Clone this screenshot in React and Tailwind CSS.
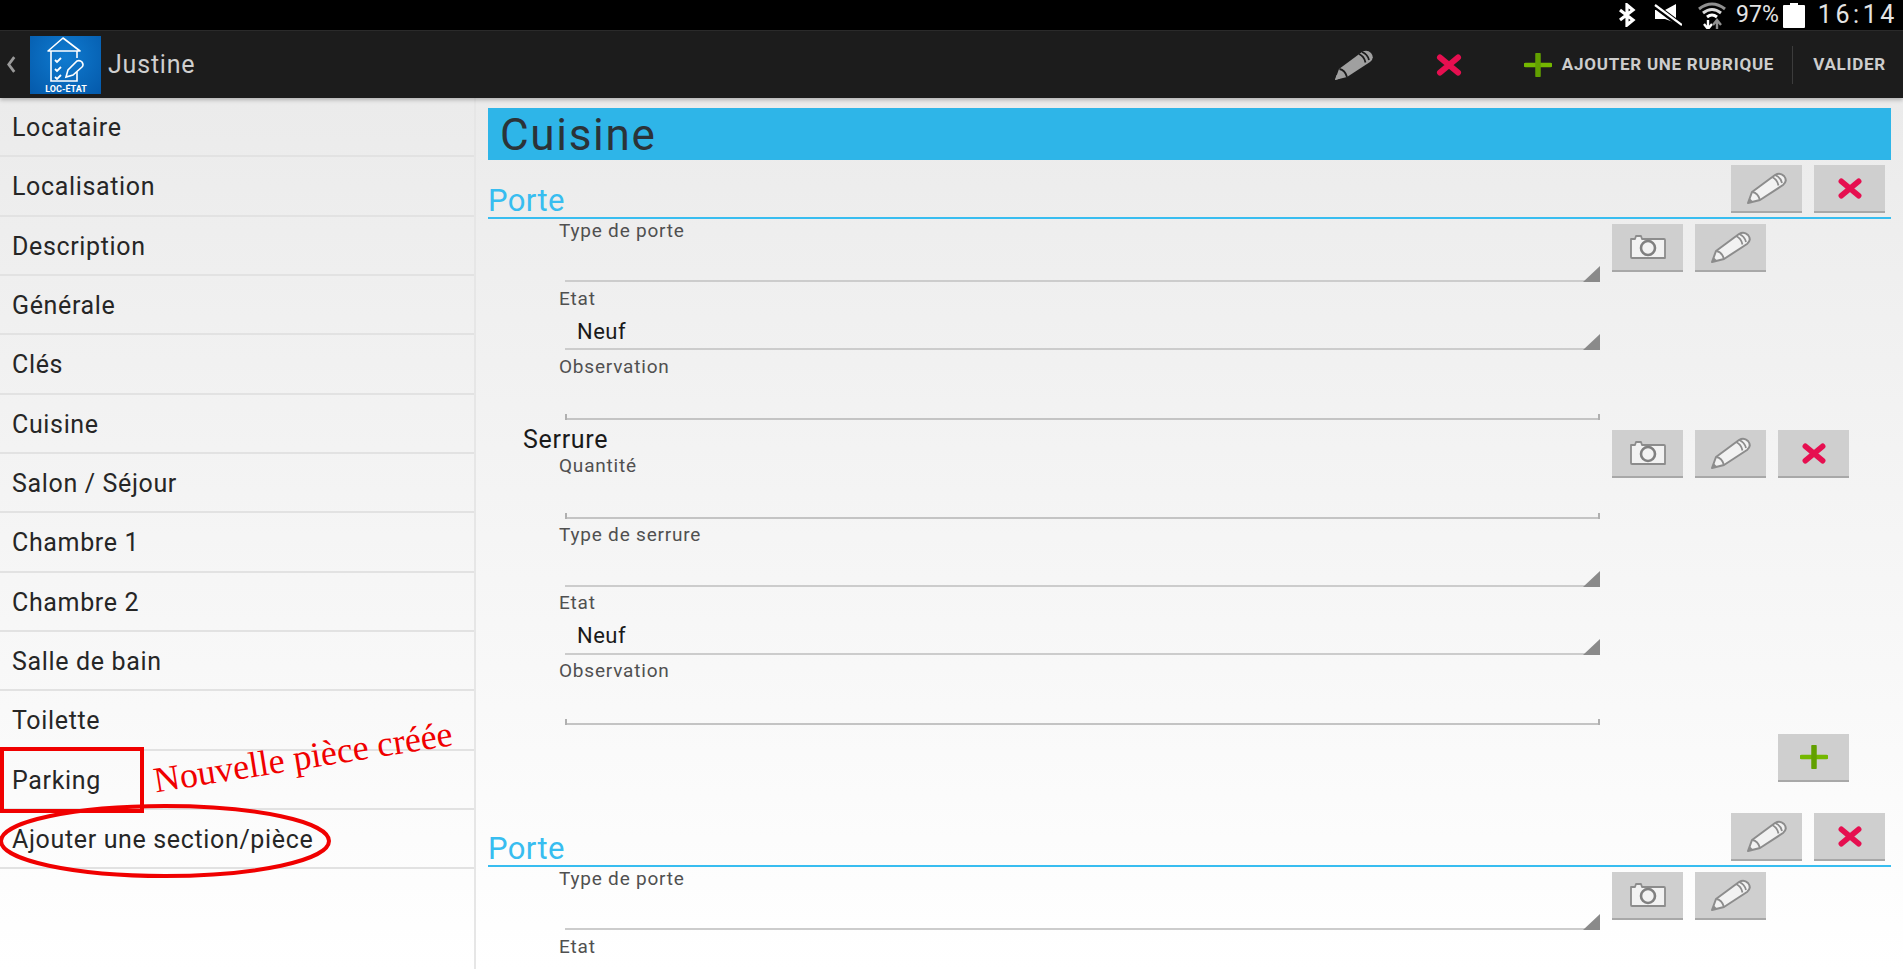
const ROWS = ['Locataire', 'Localisation', 'Description', 'Générale', 'Clés', 'Cuisine', 'Salon / Séjour', 'Chambre 1', 'Chambre 2', 'Salle de bain', 'Toilette', 'Parking', 'Ajouter une section/pièce'];

const PencilIcon = ({ className, solid }) => {
  const line = solid ? '#1c1c1c' : '#8c8c8c';
  return (
    <svg viewBox="0 0 40 32" className={className}>
      <g fill={solid ? '#a0a0a0' : '#f2f2f2'} stroke={solid ? 'none' : '#8c8c8c'} strokeWidth="2" strokeLinejoin="round">
        <path d="M1 31 L5 20 L28 3 Q33 0 37 4 Q41 9 36 13 L13 28 Z" />
      </g>
      <g fill="none" stroke={line} strokeWidth="1.8">
        <path d="M5.5 20 Q11 21 13 28" />
        <path d="M25 5 Q30 7 31.5 13.5 M28 3 Q33.5 5 35 11" />
      </g>
      <path d="M1 31 L2.5 26 L6 29.5 Z" fill={solid ? '#a0a0a0' : '#8c8c8c'} />
    </svg>
  );
};

const CrossIcon = ({ className }) => (
  <svg viewBox="0 0 26 22" className={className}>
    <path d="M4 3.5 L22 18.5 M22 3.5 L4 18.5" stroke="#e60f50" strokeWidth="6" strokeLinecap="round" />
  </svg>
);

const PlusIcon = ({ className }) => (
  <svg viewBox="0 0 28 24" className={className}>
    <path d="M1.5 12 H26.5" stroke="#74b800" strokeWidth="4.5" strokeLinecap="round" />
    <path d="M14 1.5 V22.5" stroke="#62a000" strokeWidth="5.5" strokeLinecap="round" />
  </svg>
);

const CameraIcon = () => (
  <svg viewBox="0 0 38 26" className="h-[26px] w-[38px]">
    <path d="M2 5 H6 L7 2 H12 L13 5 H35 Q36 5 36 6 V24 H3 Q2 24 2 23 Z" fill="#f2f2f2" stroke="#8c8c8c" strokeWidth="1.8" strokeLinejoin="round" />
    <circle cx="19" cy="14" r="7" fill="#f2f2f2" stroke="#808080" strokeWidth="2.6" />
  </svg>
);

const IconButton = ({ children }) => (
  <button className="flex h-12 w-[71px] shrink-0 items-center justify-center border-b-2 border-[#a8a8a8] bg-[#cfcfcf]">
    {children}
  </button>
);

const EditButton = () => <IconButton><PencilIcon className="h-[32px] w-[40px]" /></IconButton>;
const DeleteButton = () => <IconButton><CrossIcon className="h-[21px] w-[26px]" /></IconButton>;
const PhotoButton = () => <IconButton><CameraIcon /></IconButton>;

const Field = ({ label, value, select, tall, height = 'h-[68px]' }) => {
  const inputHeight = select ? (tall ? 'h-[40px]' : 'h-[39px]') : (tall ? 'h-[42px]' : 'h-[41px]');
  return (
    <div className={`ml-[71px] flex w-[1041px] flex-col ${height}`}>
      <div className="text-[19px] leading-[24px] tracking-[0.8px] text-[#505050]">{label}</div>
      <div className={`relative ml-[6px] flex items-center border-b-2 pl-[12px] pt-[3px] text-[22px] tracking-[0.5px] text-[#1a1a1a] ${inputHeight} ${select ? 'border-[#cccccc]' : 'border-[#c4c4c4]'}`}>
        {value}
        {select && <div className="absolute -bottom-[2px] right-0 h-[16px] w-[17px] bg-[#8a8a8a] [clip-path:polygon(100%_0,100%_100%,0_100%)]" />}
        {!select && <div className="absolute -bottom-[2px] right-0 h-[6px] w-[2px] bg-[#b0b0b0]" />}
        {!select && <div className="absolute -bottom-[2px] left-0 h-[6px] w-[2px] bg-[#b0b0b0]" />}
      </div>
    </div>
  );
};

const SectionHead = () => (
  <div className="flex h-[54px] items-start justify-between border-b-2 border-[#38bdf0] pr-[6px]">
    <div className="pt-[18px] text-[31px] leading-[36px] tracking-[0.4px] text-[#38bdf0]">Porte</div>
    <div className="flex gap-3">
      <EditButton />
      <DeleteButton />
    </div>
  </div>
);

const FieldRow = ({ children, buttons, top = 'top-[5px]' }) => (
  <div className="relative">
    {children}
    {/* buttons float over the right of the first field */}
    <div className={`absolute left-[1124px] flex gap-3 ${top}`}>{buttons}</div>
  </div>
);

const Logo = () => (
  <div className="h-[58px] w-[71px] shrink-0 bg-[radial-gradient(circle_at_50%_35%,#0f7bd0,#0459aa)]">
    <svg viewBox="0 0 71 58" className="h-[58px] w-[71px]">
      <g fill="none" stroke="#ffffff" strokeWidth="1.6">
        <path d="M18 15 L33 2 L50 15 Z" strokeLinejoin="round" />
        <path d="M21 15 V45 H47 V36" />
        <path d="M47 15 V22" />
        <path d="M25 24 L27 26 L31 22 M25 33 L27 35 L31 31 M25 41 L27 43 L31 39" strokeWidth="1.8" />
        <path d="M36 41 L38 34 L47 25 Q50 24 52 26 Q54 29 52 31 L43 39 Z" />
      </g>
      <text x="36" y="56" textAnchor="middle" fill="#ffffff" fontSize="9" fontWeight="700" fontFamily="Roboto, sans-serif">LOC-ÉTAT</text>
    </svg>
  </div>
);

export default function App() {
  return (
    <div className="relative flex h-screen w-full flex-col overflow-hidden font-['Roboto',sans-serif]">
      {/* status bar */}
      <div className="flex h-[30px] shrink-0 items-center justify-end bg-black pr-[5px] text-[#e4e4e4]">
        <svg viewBox="0 0 20 24" className="mr-[17px] h-[24px] w-[20px]">
          <path d="M3 7 L16 17 L10 22 V2 L16 7 L3 17" fill="none" stroke="#ffffff" strokeWidth="3.2" />
        </svg>
        <svg viewBox="0 0 28 24" className="mr-[15px] h-[24px] w-[28px]">
          <path d="M1 7 H11 L22 1 V20 L11 16 H1 Z" fill="#ffffff" />
          <path d="M0 2 L28 23" stroke="#000000" strokeWidth="5.5" />
          <path d="M1 2 L28 22" stroke="#ffffff" strokeWidth="2.2" />
        </svg>
        <svg viewBox="0 0 30 28" className="mr-[9px] h-[28px] w-[30px]">
          <path d="M2 8 Q15 -2 28 8" fill="none" stroke="#8f8f8f" strokeWidth="3" />
          <path d="M6 12 Q15 5 24 12" fill="none" stroke="#d8d8d8" strokeWidth="3" />
          <path d="M10 16 Q15 12 20 16" fill="none" stroke="#ffffff" strokeWidth="3" />
          <path d="M11 19 V27 M7 23 L11 28 L15 23" fill="none" stroke="#ffffff" strokeWidth="2.4" />
          <path d="M20 28 V20 M16 24 L20 19 L24 24" fill="none" stroke="#8f8f8f" strokeWidth="2.4" />
        </svg>
        <span className="text-[23px] leading-[30px]">97%</span>
        <div className="relative ml-[4px] mr-[13px] mt-[2px] h-[23px] w-[22px] rounded-[1px] bg-white">
          <div className="absolute -top-[2px] left-[7px] h-[2px] w-[8px] bg-white" />
        </div>
        <span className="text-[25px] leading-[30px] tracking-[3.6px]">16:14</span>
      </div>

      {/* action bar */}
      <div className="z-10 flex h-[68px] shrink-0 items-center border-t border-[#2a2a2a] bg-[#1c1c1c] shadow-[0_2px_4px_rgba(0,0,0,0.25)]">
        <svg viewBox="0 0 12 20" className="ml-[6px] mr-[13px] h-[19px] w-[11px]">
          <path d="M9 2 L3 10 L9 18" fill="none" stroke="#9a9a9a" strokeWidth="3" />
        </svg>
        <Logo />
        <div className="ml-[7px] text-[25px] tracking-[0.8px] text-[#cfcfcf]">Justine</div>
        <div className="ml-auto flex items-center">
          <PencilIcon solid className="mr-[62px] h-[34px] w-[40px]" />
          <CrossIcon className="mr-[62px] h-[22px] w-[26px]" />
          <PlusIcon className="mr-[10px] h-[24px] w-[28px]" />
          <span className="text-[17px] font-bold tracking-[0.75px] text-[#cdcdcd]">AJOUTER UNE RUBRIQUE</span>
          <div className="ml-[18px] mr-[20px] h-[38px] w-px bg-[#3c3c3c]" />
          <span className="mr-[17px] text-[17px] font-bold tracking-[0.75px] text-[#cdcdcd]">VALIDER</span>
        </div>
      </div>

      {/* body */}
      <div className="flex min-h-0 flex-1 bg-gradient-to-b from-[#ebebeb] to-white">
        <div className="w-[476px] shrink-0 border-r-2 border-[#e6e6e6]">
          {ROWS.map((row) => (
            <div key={row} className="flex h-[59.33px] items-center border-b-2 border-[#e2e2e2] pl-[12px] pt-[2px] text-[25px] tracking-[0.65px] text-[#262626]">
              {row}
            </div>
          ))}
        </div>

        <div className="min-w-0 flex-1 overflow-hidden pl-[12px] pr-[12px] pt-[10px]">
          <div className="flex h-[52px] items-center bg-[#2eb5e8] pl-[12px] pt-[2px] text-[44px] tracking-[1.7px] text-[#2b3338]">Cuisine</div>

          <div className="h-[5px]" />
          <SectionHead />
          <FieldRow buttons={<><PhotoButton /><EditButton /></>}>
            <Field label="Type de porte" select />
          </FieldRow>
          <Field label="Etat" value="Neuf" select />
          <Field label="Observation" />

          <FieldRow top="top-[7px]" buttons={<><PhotoButton /><EditButton /><DeleteButton /></>}>
            <div className="flex h-[31px] items-end pl-[35px] text-[25px] leading-[28px] tracking-[0.7px] text-[#1a1a1a]">Serrure</div>
          </FieldRow>
          <Field label="Quantité" height="h-[69px]" />
          <Field label="Type de serrure" select tall />
          <Field label="Etat" value="Neuf" select tall />
          <Field label="Observation" tall />

          <div className="flex h-[86px] justify-end pr-[42px] pt-[7px]">
            <IconButton><PlusIcon className="h-[24px] w-[28px]" /></IconButton>
          </div>

          <SectionHead />
          <FieldRow buttons={<><PhotoButton /><EditButton /></>}>
            <Field label="Type de porte" select />
          </FieldRow>
          <Field label="Etat" />
        </div>
      </div>

      {/* red annotations drawn over the screenshot */}
      <div className="absolute left-0 top-[747px] h-[66px] w-[144px] border-[4px] border-[#f00000]" />
      <svg viewBox="0 0 332 74" className="absolute left-0 top-[804px] h-[74px] w-[332px]">
        <ellipse cx="165" cy="37" rx="164" ry="35" fill="none" stroke="#f00000" strokeWidth="4" />
      </svg>
      <div className="absolute left-[152px] top-[737px] rotate-[-9deg] whitespace-nowrap font-['Liberation_Serif',serif] text-[36px] leading-[40px] text-[#f00000]">
        Nouvelle pièce créée
      </div>
    </div>
  );
}
